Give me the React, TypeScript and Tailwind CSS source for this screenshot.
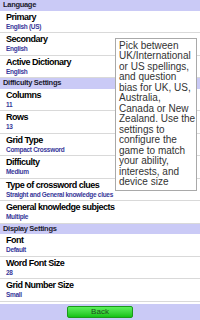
import React from 'react';

type Item = { title: string; value: string };
type Section = { name: string; items: Item[] };

const sections: Section[] = [
  {
    name: 'Language',
    items: [
      { title: 'Primary', value: 'English (US)' },
      { title: 'Secondary', value: 'English' },
      { title: 'Active Dictionary', value: 'English' },
    ],
  },
  {
    name: 'Difficulty Settings',
    items: [
      { title: 'Columns', value: '11' },
      { title: 'Rows', value: '13' },
      { title: 'Grid Type', value: 'Compact Crossword' },
      { title: 'Difficulty', value: 'Medium' },
      { title: 'Type of crossword clues', value: 'Straight and General knowledge clues' },
      { title: 'General knowledge subjects', value: 'Multiple' },
    ],
  },
  {
    name: 'Display Settings',
    items: [
      { title: 'Font', value: 'Default' },
      { title: 'Word Font Size', value: '28' },
      { title: 'Grid Number Size', value: 'Small' },
    ],
  },
];

const tipLines = [
  'Pick between',
  'UK/International',
  'or US spellings,',
  'and question',
  'bias for UK, US,',
  'Australia,',
  'Canada or New',
  'Zealand. Use the',
  'settings to',
  'configure the',
  'game to match',
  'your ability,',
  'interests, and',
  'device size',
];

const Row: React.FC<{ item: Item }> = ({ item }) => (
  <div className="h-[22.5px] shrink-0 border-b border-[#d9d9d9] pl-[6px] pt-[1px] overflow-hidden">
    <div className="h-[11px] text-[9px] leading-[11px] font-bold tracking-[-0.5px] text-black whitespace-nowrap">
      {item.title}
    </div>
    <div className="h-[8px] text-[6.5px] leading-[8px] font-bold tracking-[-0.3px] text-[#38389a] whitespace-nowrap">
      {item.value}
    </div>
  </div>
);

export default function App() {
  return (
    <div
      className="relative w-[200px] h-[320px] bg-white flex flex-col overflow-hidden"
      style={{ fontFamily: '"Liberation Sans", Arial, sans-serif' }}
    >
      {/* settings list */}
      <div className="flex-1 flex flex-col overflow-hidden">
        {sections.map((s) => (
          <React.Fragment key={s.name}>
            <div className="h-[10.5px] shrink-0 bg-[#cacaf6] pl-[3px] text-[7.5px] leading-[10.5px] font-bold tracking-[-0.3px] text-[#1a1a2e]">
              {s.name}
            </div>
            {s.items.map((it) => (
              <Row key={it.title} item={it} />
            ))}
          </React.Fragment>
        ))}
        {/* next row, mostly hidden behind the bar */}
        <div className="h-[22.5px] shrink-0 pl-[6px] pt-[1px] flex justify-end">
          <div className="mt-[1px] mr-[1px] w-[17px] h-[10px] border border-[#cfcfcf] bg-white" />
        </div>
      </div>

      {/* bottom bar */}
      <div className="h-[16px] shrink-0 bg-[#cacaf6] flex items-center justify-center">
        <button className="w-[66px] h-[12px] rounded-[2px] border border-[#1a9a1a] bg-gradient-to-b from-[#5cf05c] to-[#12c212] text-[8px] leading-[10px] text-[#1d4d1d]">
          Back
        </button>
      </div>

      {/* help tooltip */}
      <div className="absolute left-[115px] top-[38px] w-[82px] border border-[#a9a9a9] bg-white pl-[3px] pt-[1.5px] pb-[2px] text-[10px] leading-[10.5px] text-[#333333]">
        {tipLines.map((l) => (
          <div key={l} className="whitespace-nowrap">
            {l}
          </div>
        ))}
      </div>
    </div>
  );
}
